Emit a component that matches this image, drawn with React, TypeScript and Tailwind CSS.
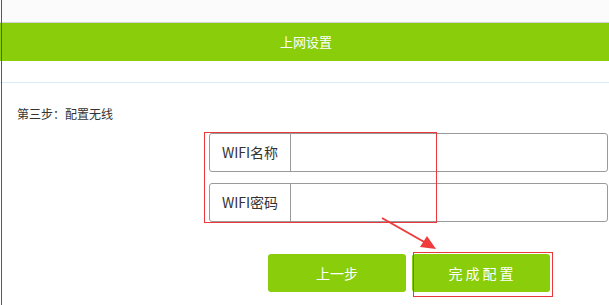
import React from "react"

const font = { fontFamily: '"Noto Sans CJK SC", "Noto Sans", sans-serif' }

function Field({ label }: { label: string }) {
  return (
    <div className="flex h-[39px] w-[399px] rounded-[3px] border border-[#9a9a9a] bg-white">
      <div className="flex w-[81px] items-center justify-center border-r border-[#9a9a9a] text-[14px] text-[#333]">
        {label}
      </div>
      <input className="flex-1 bg-transparent px-2 text-[14px] outline-none" />
    </div>
  )
}

export default function App() {
  return (
    <div className="relative h-[305px] w-[609px] overflow-hidden bg-white" style={font}>
      {/* header */}
      <div className="h-[23px] border-b border-[#d4d4d4] bg-[#fbfbfb]" />
      <div className="flex h-[38px] items-center justify-center bg-[#89cd0b] pl-[3px] text-[13px] text-white">
        上网设置
      </div>
      <div className="h-[22px] border-b border-[#dbeaf5]" />

      {/* body */}
      <div className="pl-[17px] pt-[22px] text-[12px] leading-[18px] text-[#333]">第三步：配置无线</div>

      <div className="mt-[10px] flex flex-col gap-[11px] pl-[209px]">
        <Field label="WIFI名称" />
        <Field label="WIFI密码" />
      </div>

      <div className="mt-[32px] flex gap-[6px] pl-[268px]">
        <button className="h-[38px] w-[138px] rounded-[3px] bg-[#89cd0b] text-[14px] text-white">上一步</button>
        <button className="h-[38px] w-[138px] rounded-[3px] bg-[#89cd0b] pl-[3px] text-[14px] tracking-[3px] text-white">
          完成配置
        </button>
      </div>

      {/* annotations */}
      <div className="absolute left-[1px] top-0 h-full w-[1px] bg-[#e02020]" />
      <div className="absolute left-[204px] top-[132px] h-[91px] w-[233px] border border-[#e8383b]" />
      <div className="absolute left-[413px] top-[252px] h-[45px] w-[140px] border border-[#e8383b]" />
      <svg className="absolute left-0 top-0" width="609" height="305">
        <line x1="382" y1="218" x2="426" y2="243" stroke="#ee3b3b" strokeWidth="2" />
        <polygon points="436,249 420,247 427,236" fill="#ee3b3b" />
      </svg>
    </div>
  )
}
